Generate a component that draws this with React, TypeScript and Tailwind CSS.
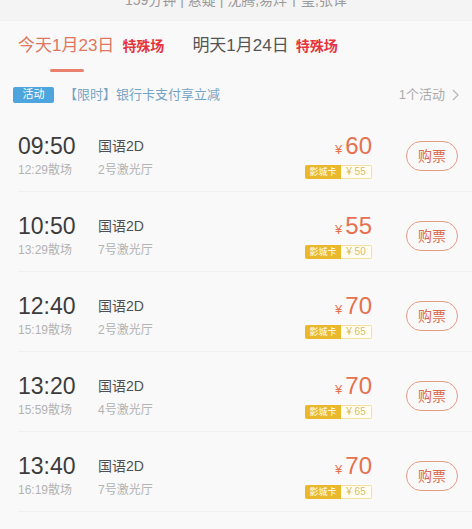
const font = { fontFamily: '"Liberation Sans", "Noto Sans CJK SC", sans-serif' };

interface Show {
  start: string;
  end: string;
  lang: string;
  hall: string;
  price: number;
  card: number;
}

const shows: Show[] = [
  { start: '09:50', end: '12:29', lang: '国语2D', hall: '2号激光厅', price: 60, card: 55 },
  { start: '10:50', end: '13:29', lang: '国语2D', hall: '7号激光厅', price: 55, card: 50 },
  { start: '12:40', end: '15:19', lang: '国语2D', hall: '2号激光厅', price: 70, card: 65 },
  { start: '13:20', end: '15:59', lang: '国语2D', hall: '4号激光厅', price: 70, card: 65 },
  { start: '13:40', end: '16:19', lang: '国语2D', hall: '7号激光厅', price: 70, card: 65 },
];

function ShowRow({ show }: { show: Show }) {
  return (
    <div className="ml-[18px] flex h-[80px] border-b border-[#f1f1f1]">
      <div className="w-[80px] pt-[21px]">
        <div className="text-[23px] leading-[26px] text-[#3c3c3c]">{show.start}</div>
        <div className="mt-[3px] text-[12px] leading-[16px] text-[#b3b3b3]">{show.end}散场</div>
      </div>
      <div className="pt-[25px]">
        <div className="text-[14px] leading-[18px] text-[#505050]">{show.lang}</div>
        <div className="mt-[7px] text-[12px] leading-[16px] text-[#b3b3b3]">{show.hall}</div>
      </div>
      <div className="ml-auto flex flex-col items-end pt-[21px]">
        <div className="flex items-baseline text-[#e5714f] leading-[26px]">
          <span className="mr-[3px] text-[13px]">¥</span>
          <span className="text-[24px]">{show.price}</span>
        </div>
        <div className="mt-[2px] flex h-[14px] text-[9px] leading-[14px]">
          <span className="w-[36px] rounded-l-[2px] bg-[#e9b82c] text-center text-white">影城卡</span>
          <span className="w-[31px] rounded-r-[2px] border border-l-0 border-[#efe1a4] bg-[#fffdf2] text-center text-[10px] leading-[12px] text-[#d6bd6a]">
            ¥ {show.card}
          </span>
        </div>
      </div>
      <div className="ml-[34px] mr-[14px] pt-[29px]">
        <button className="flex h-[30px] w-[52px] items-center justify-center rounded-full border-[1.5px] border-[#e39b8a] text-[14px] text-[#d9694f]">
          购票
        </button>
      </div>
    </div>
  );
}

export default function App() {
  return (
    <div style={font} className="h-[529px] w-[472px] overflow-hidden bg-[#f9f9f9]">
      <div className="h-[21px] overflow-hidden border-b border-[#f0f0f0] bg-[#f4f4f4]">
        <div className="-mt-[9px] text-center text-[14px] leading-[18px] text-[#9a9a9a]">
          159分钟 | 悬疑 | 沈腾,易烊千玺,张译
        </div>
      </div>
      <div className="flex h-[56px] items-start pl-[18px] pt-[14px]">
        <div className="flex flex-col">
          <div className="flex items-center">
            <span className="text-[17px] leading-[22px] text-[#e0775f]">今天1月23日</span>
            <span className="ml-[8px] text-[14px] font-bold text-[#e5343c]">特殊场</span>
          </div>
          <div className="ml-[32px] mt-[12px] h-[3px] w-[34px] rounded-full bg-[#e8816d]" />
        </div>
        <div className="ml-[28px] flex items-center">
          <span className="text-[17px] leading-[22px] text-[#555]">明天1月24日</span>
          <span className="ml-[7px] text-[14px] font-bold text-[#e5343c]">特殊场</span>
        </div>
      </div>
      <div className="flex h-[35px] items-center pl-[13px] pr-[12px]">
        <span className="flex h-[16px] w-[41px] items-center justify-center rounded-[2px] bg-[#4da5de] text-[11px] text-white">
          活动
        </span>
        <span className="ml-[10px] text-[13px] text-[#74a4c4]">【限时】银行卡支付享立减</span>
        <span className="ml-auto flex items-center text-[13px] text-[#ababab]">
          1个活动
          <svg width="9" height="14" viewBox="0 0 9 14" className="ml-[6px]" fill="none">
            <path d="M2 2l5 5-5 5" stroke="#b8b8b8" strokeWidth="1.3" />
          </svg>
        </span>
      </div>
      <div>
        {shows.map((s) => (
          <ShowRow key={s.start} show={s} />
        ))}
      </div>
    </div>
  );
}
